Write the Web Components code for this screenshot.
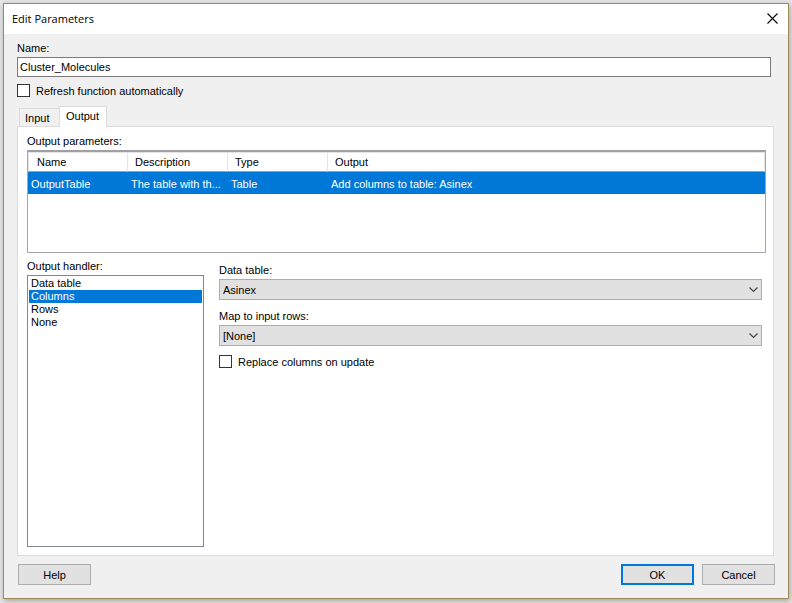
<!DOCTYPE html>
<html lang="en">
<head>
<meta charset="utf-8">
<title>Edit Parameters</title>
<style>
  html {
    background: #e6e6e6;
  }

  body {
    --color-accent: #0078d7;
    --color-face: #f0f0f0;
    --color-button: #e1e1e1;
    --color-border: #adadad;
    --color-tab-border: #dcdcdc;
    margin: 0;
    padding: 3px 3px 4px;
    box-sizing: border-box;
    min-height: 100vh;
    display: flex;
    font: 11px/14px "Liberation Sans", Arial, sans-serif;
    color: #000;
  }

  .general {
    padding: 7px 17px 9px 13px;
    display: grid;
    gap: 7px;
  }

  tab-panel {
    flex: 1;
    margin: 0 14px 0 13px;
  }

  .handler {
    flex: 1;
    display: flex;
    gap: 15px;
  }

  .settings {
    flex: 1;
    padding: 4px 4px 0 0;
    display: flex;
    flex-direction: column;
    gap: 9px;
  }
</style>
</head>
<body>

<dialog-window heading="Edit Parameters">
  <div class="general">
    <text-field label="Name:" value="Cluster_Molecules"></text-field>
    <check-field label="Refresh function automatically"></check-field>
  </div>

  <tab-panel tabs="Input,Output" active="Output">
    <param-table label="Output parameters:"></param-table>
    <div class="handler">
      <list-field label="Output handler:" options="Data table,Columns,Rows,None" value="Columns"></list-field>
      <div class="settings">
        <select-field label="Data table:" value="Asinex"></select-field>
        <select-field label="Map to input rows:" value="[None]"></select-field>
        <check-field label="Replace columns on update"></check-field>
      </div>
    </div>
  </tab-panel>

  <push-button slot="help">Help</push-button>
  <push-button slot="actions" primary>OK</push-button>
  <push-button slot="actions">Cancel</push-button>
</dialog-window>

<script>
class DialogWindow extends HTMLElement {
  constructor() {
    super();
    this.attachShadow({ mode: "open" });
  }

  connectedCallback() {
    this.shadowRoot.innerHTML = `
      <style>
        :host {
          flex: 1;
          display: flex;
          flex-direction: column;
          border: 1px solid #a08a58;
          background: var(--color-face);
          box-shadow: 1px 2px 6px rgba(0, 0, 0, 0.3);
        }

        header {
          display: flex;
          align-items: center;
          justify-content: space-between;
          height: 30px;
          padding: 0 4px 0 8px;
          background: #fff;
        }

        h1 {
          margin: 0;
          font: 11px/16px "Open Sans", "Noto Sans", sans-serif;
        }

        header button {
          align-self: flex-start;
          display: grid;
          place-items: center;
          width: 23px;
          height: 28px;
          padding: 0;
          border: 0;
          background: none;
        }

        .content {
          flex: 1;
          display: flex;
          flex-direction: column;
        }

        footer {
          display: flex;
          gap: 8px;
          padding: 8px 13px 13px 14px;
        }

        .spacer {
          flex: 1;
        }
      </style>

      <header>
        <h1>${this.getAttribute("heading")}</h1>
        <button type="button" aria-label="Close">
          <svg width="11" height="11" viewBox="0 0 11 11" fill="none" stroke="#000" stroke-width="1.1">
            <path d="M0.5 0.5 10.5 10.5M10.5 0.5 0.5 10.5" />
          </svg>
        </button>
      </header>
      <div class="content"><slot></slot></div>
      <footer>
        <slot name="help"></slot>
        <span class="spacer"></span>
        <slot name="actions"></slot>
      </footer>
    `;
  }
}

class TextField extends HTMLElement {
  constructor() {
    super();
    this.attachShadow({ mode: "open" });
  }

  connectedCallback() {
    this.shadowRoot.innerHTML = `
      <style>
        :host {
          display: grid;
          gap: 2px;
        }

        input {
          box-sizing: border-box;
          width: 100%;
          height: 20px;
          padding: 0 2px;
          border: 1px solid #7a7a7a;
          background: #fff;
          font: inherit;
          color: inherit;
          outline: none;
        }
      </style>

      <label for="field">${this.getAttribute("label")}</label>
      <input id="field" type="text" value="${this.getAttribute("value")}">
    `;
  }
}

class CheckField extends HTMLElement {
  constructor() {
    super();
    this.attachShadow({ mode: "open" });
  }

  connectedCallback() {
    this.shadowRoot.innerHTML = `
      <style>
        :host {
          display: block;
        }

        label {
          display: flex;
          align-items: flex-start;
          gap: 6px;
          height: 13px;
          line-height: 15px;
        }

        input {
          appearance: none;
          box-sizing: border-box;
          width: 13px;
          height: 13px;
          margin: 0;
          border: 1px solid #333;
          background: #fff;
        }

        input:checked {
          background: #333;
          box-shadow: inset 0 0 0 2px #fff;
        }
      </style>

      <label><input type="checkbox">${this.getAttribute("label")}</label>
    `;
  }
}

class TabPanel extends HTMLElement {
  constructor() {
    super();
    this.attachShadow({ mode: "open" });
  }

  connectedCallback() {
    const active = this.getAttribute("active");
    const tabs = this.getAttribute("tabs").split(",");

    this.shadowRoot.innerHTML = `
      <style>
        :host {
          display: flex;
          flex-direction: column;
        }

        .tabs {
          display: flex;
          align-items: flex-end;
          padding-left: 2px;
        }

        button {
          height: 19px;
          min-width: 40px;
          padding: 0 6px 0 5px;
          border: 1px solid var(--color-tab-border);
          border-right: 0;
          border-bottom: 0;
          background: var(--color-face);
          font: inherit;
          color: inherit;
          text-align: left;
        }

        button[aria-selected="true"] {
          height: 21px;
          min-width: 48px;
          padding: 0 6px 2px;
          border-right: 1px solid var(--color-tab-border);
          background: #fff;
          z-index: 1;
        }

        .panel {
          flex: 1;
          display: flex;
          flex-direction: column;
          gap: 6px;
          margin-top: -1px;
          padding: 7px 7px 8px 9px;
          border: 1px solid var(--color-tab-border);
          background: #fff;
        }
      </style>

      <div class="tabs" role="tablist">
        ${tabs.map((tab) => `<button type="button" role="tab" aria-selected="${tab === active}">${tab}</button>`).join("")}
      </div>
      <div class="panel" role="tabpanel"><slot></slot></div>
    `;
  }
}

class ParamTable extends HTMLElement {
  constructor() {
    super();
    this.attachShadow({ mode: "open" });
  }

  connectedCallback() {
    this.shadowRoot.innerHTML = `
      <style>
        :host {
          display: grid;
          gap: 2px;
        }

        .view {
          box-sizing: border-box;
          min-height: 103px;
          border: 1px solid #a5a6ab;
          border-top: 2px solid #a0a0a4;
        }

        table {
          width: 100%;
          table-layout: fixed;
          border-collapse: separate;
          border-spacing: 0;
        }

        col {
          width: 100px;
        }

        col:last-child {
          width: auto;
        }

        th,
        td {
          overflow: hidden;
          white-space: nowrap;
          text-align: left;
          font-weight: normal;
        }

        th {
          height: 18px;
          padding: 0 0 0 7px;
          border-top: 1px solid #e5e5e5;
          border-right: 1px solid #e5e5e5;
          border-bottom: 1px solid #a0a0a0;
        }

        th:first-child {
          padding-left: 8px;
          border-left: 1px solid #e5e5e5;
        }

        td {
          box-sizing: border-box;
          height: 22px;
          padding: 2px 0 0 3px;
          background: var(--color-accent);
          color: #fff;
        }
      </style>

      <span id="caption">${this.getAttribute("label")}</span>
      <div class="view">
        <table aria-labelledby="caption">
          <colgroup><col><col><col><col></colgroup>
          <thead>
            <tr><th>Name</th><th>Description</th><th>Type</th><th>Output</th></tr>
          </thead>
          <tbody>
            <tr>
              <td>OutputTable</td>
              <td>The table with th...</td>
              <td>Table</td>
              <td>Add columns to table: Asinex</td>
            </tr>
          </tbody>
        </table>
      </div>
    `;
  }
}

class ListField extends HTMLElement {
  constructor() {
    super();
    this.attachShadow({ mode: "open" });
  }

  connectedCallback() {
    const value = this.getAttribute("value");
    const options = this.getAttribute("options").split(",");

    this.shadowRoot.innerHTML = `
      <style>
        :host {
          display: flex;
          flex-direction: column;
          gap: 2px;
          width: 177px;
        }

        select {
          flex: 1;
          box-sizing: border-box;
          width: 100%;
          padding: 1px;
          border: 1px solid #828790;
          border-radius: 0;
          background: #fff;
          font: inherit;
          color: inherit;
          outline: none;
          overflow: hidden;
        }

        option {
          min-height: 13px;
          height: 13px;
          padding: 0 0 0 2px;
          line-height: 15px;
        }

        option:checked {
          background: var(--color-accent) linear-gradient(var(--color-accent), var(--color-accent));
          color: #fff;
        }
      </style>

      <label for="list">${this.getAttribute("label")}</label>
      <select id="list" size="${options.length}">
        ${options.map((option) => `<option${option === value ? " selected" : ""}>${option}</option>`).join("")}
      </select>
    `;
  }
}

class SelectField extends HTMLElement {
  constructor() {
    super();
    this.attachShadow({ mode: "open" });
  }

  connectedCallback() {
    this.shadowRoot.innerHTML = `
      <style>
        :host {
          display: grid;
          gap: 2px;
        }

        .box {
          display: grid;
          align-items: center;
        }

        select,
        svg {
          grid-area: 1 / 1;
        }

        select {
          appearance: none;
          box-sizing: border-box;
          width: 100%;
          height: 21px;
          padding: 0 20px 0 3px;
          border: 1px solid var(--color-border);
          border-radius: 0;
          background: var(--color-button);
          font: inherit;
          color: inherit;
        }

        svg {
          justify-self: end;
          margin-right: 4px;
          pointer-events: none;
        }
      </style>

      <label for="choice">${this.getAttribute("label")}</label>
      <div class="box">
        <select id="choice"><option>${this.getAttribute("value")}</option></select>
        <svg width="9" height="5" viewBox="0 0 9 5" fill="none" stroke="#444" stroke-width="1.2">
          <path d="M0.5 0.5 4.5 4.4 8.5 0.5" />
        </svg>
      </div>
    `;
  }
}

class PushButton extends HTMLElement {
  constructor() {
    super();
    this.attachShadow({ mode: "open" });
  }

  connectedCallback() {
    this.shadowRoot.innerHTML = `
      <style>
        :host {
          display: block;
        }

        button {
          box-sizing: border-box;
          display: block;
          min-width: 73px;
          height: 21px;
          padding: 0 8px;
          border: 1px solid var(--color-border);
          background: var(--color-button);
          font: inherit;
          color: inherit;
        }

        :host([primary]) button {
          border: 2px solid var(--color-accent);
        }
      </style>

      <button type="button"><slot></slot></button>
    `;
  }
}

customElements.define("dialog-window", DialogWindow);
customElements.define("text-field", TextField);
customElements.define("check-field", CheckField);
customElements.define("tab-panel", TabPanel);
customElements.define("param-table", ParamTable);
customElements.define("list-field", ListField);
customElements.define("select-field", SelectField);
customElements.define("push-button", PushButton);
</script>
</body>
</html>
